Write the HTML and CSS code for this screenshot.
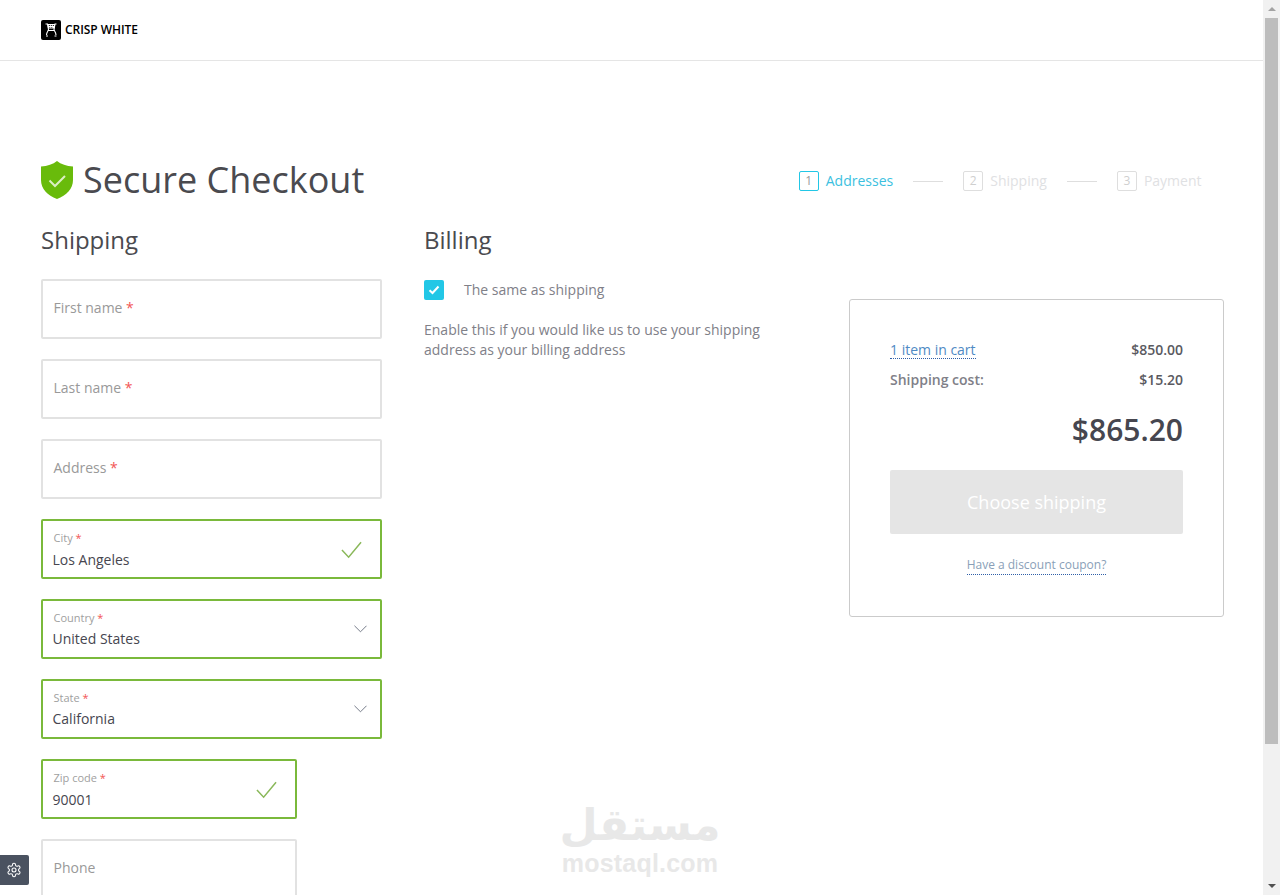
FILE: index.html
```html
<!DOCTYPE html>
<html lang="en">
<head>
<meta charset="utf-8">
<title>Secure Checkout</title>
<link rel="stylesheet" href="styles.css">
</head>
<body>
<div class="page">
  <div class="content">
    <header class="topbar">
      <a class="logo" href="#">
        <svg class="logo-mark" viewBox="0 0 20 20" aria-hidden="true">
          <rect width="20" height="20" rx="2" fill="#000"/>
          <path d="M6.500 4h7.500l-.5 4.500H7z" fill="#fff"/>
          <path d="M7.800 5h1v1h-1zM9.800 5h1v1h-1zM11.800 5h1v1h-1zM8.300 6.900h1v.8h-1zM10.300 6.900h1v.8h-1z" fill="#000"/>
          <path d="M4.500 4h2c.3 2 .8 4.500 1 5.500.2 1-2 2.500-2 5.500M15.500 4h-1.500c-.3 2-.8 4.500-1 5.500-.2 1 2 2.500 2 5.500M7 10.500h6M5 16h2M13.500 16h2" fill="none" stroke="#fff" stroke-width="1.100"/>
        </svg>
        <span class="logo-text">CRISP WHITE</span>
      </a>
    </header>

    <main class="main">
      <div class="head">
        <div class="title">
          <svg class="shield" viewBox="0 0 32 38" aria-hidden="true">
            <path d="M16 0c4 3.200 9.500 5 16 5.500v13.500c0 9-6.500 15.500-16 19C6.500 34.500 0 28 0 19V5.500C6.500 5 12 3.200 16 0z" fill="#69bb0b"/>
            <path d="M8.500 19.500l5.500 5.500 10-10" fill="none" stroke="#dcefc4" stroke-width="2"/>
          </svg>
          <h1>Secure Checkout</h1>
        </div>
        <ol class="steps">
          <li class="step step-active"><span class="step-num">1</span><span>Addresses</span></li>
          <li class="step-line"></li>
          <li class="step"><span class="step-num">2</span><span>Shipping</span></li>
          <li class="step-line"></li>
          <li class="step"><span class="step-num">3</span><span>Payment</span></li>
        </ol>
      </div>

      <div class="columns">
        <section class="col-shipping">
          <h2>Shipping</h2>
          <div class="fields">
            <div class="field"><span class="placeholder">First name <b>*</b></span></div>
            <div class="field"><span class="placeholder">Last name <b>*</b></span></div>
            <div class="field"><span class="placeholder">Address <b>*</b></span></div>
            <div class="field field-valid">
              <div class="stack"><span class="label">City <b>*</b></span><span class="value">Los Angeles</span></div>
              <svg class="check" viewBox="0 0 22 18" aria-hidden="true"><path d="M1 9l7 7.500L21 1"/></svg>
            </div>
            <div class="field field-valid">
              <div class="stack stack-select"><span class="label">Country <b>*</b></span><span class="value">United States</span></div>
              <svg class="chevron" viewBox="0 0 14 8" aria-hidden="true"><path d="M.5.500L7 7l6.500-6.500"/></svg>
            </div>
            <div class="field field-valid">
              <div class="stack stack-select"><span class="label">State <b>*</b></span><span class="value">California</span></div>
              <svg class="chevron" viewBox="0 0 14 8" aria-hidden="true"><path d="M.5.500L7 7l6.500-6.500"/></svg>
            </div>
            <div class="field field-valid field-short">
              <div class="stack"><span class="label">Zip code <b>*</b></span><span class="value">90001</span></div>
              <svg class="check" viewBox="0 0 22 18" aria-hidden="true"><path d="M1 9l7 7.500L21 1"/></svg>
            </div>
            <div class="field field-short"><span class="placeholder">Phone</span></div>
          </div>
        </section>

        <section class="col-billing">
          <h2>Billing</h2>
          <label class="same">
            <span class="checkbox">
              <svg viewBox="0 0 12 10" aria-hidden="true"><path d="M1.500 5.200L4.500 8l6-6.500"/></svg>
            </span>
            <span>The same as shipping</span>
          </label>
          <p class="hint">Enable this if you would like us to use your shipping address as your billing address</p>
        </section>

        <aside class="summary">
          <div class="row"><a class="link-cart" href="#">1 item in cart</a><span class="price">$850.00</span></div>
          <div class="row"><span class="cost-label">Shipping cost:</span><span class="price">$15.20</span></div>
          <div class="total">$865.20</div>
          <button class="btn" type="button">Choose shipping</button>
          <div class="coupon"><a href="#">Have a discount coupon?</a></div>
        </aside>
      </div>
    </main>
  </div>

  <div class="scrollbar">
    <span class="arrow-up"></span>
    <span class="thumb"></span>
    <span class="arrow-down"></span>
  </div>

  <button class="gear" type="button" aria-label="Settings">
    <svg viewBox="0 0 24 24" aria-hidden="true">
      <path d="M12.220 2h-.44a2 2 0 0 0-2 2v.18a2 2 0 0 1-1 1.730l-.43.25a2 2 0 0 1-2 0l-.15-.08a2 2 0 0 0-2.730.73l-.22.38a2 2 0 0 0 .73 2.730l.15.1a2 2 0 0 1 1 1.720v.51a2 2 0 0 1-1 1.740l-.15.09a2 2 0 0 0-.73 2.730l.22.38a2 2 0 0 0 2.730.73l.15-.08a2 2 0 0 1 2 0l.43.25a2 2 0 0 1 1 1.730V20a2 2 0 0 0 2 2h.44a2 2 0 0 0 2-2v-.18a2 2 0 0 1 1-1.730l.43-.25a2 2 0 0 1 2 0l.15.08a2 2 0 0 0 2.730-.73l.22-.39a2 2 0 0 0-.73-2.730l-.15-.08a2 2 0 0 1-1-1.740v-.5a2 2 0 0 1 1-1.740l.15-.09a2 2 0 0 0 .73-2.730l-.22-.38a2 2 0 0 0-2.730-.73l-.15.08a2 2 0 0 1-2 0l-.43-.25a2 2 0 0 1-1-1.730V4a2 2 0 0 0-2-2z"/>
      <circle cx="12" cy="12" r="3"/>
    </svg>
  </button>

  <div class="watermark">
    <span class="wm-ar" lang="ar" dir="rtl">مستقل</span>
    <span class="wm-en">mostaql.com</span>
  </div>
</div>
</body>
</html>
```

FILE: styles.css
```css
* { box-sizing: border-box; }
html, body { margin: 0; height: 100%; overflow: hidden; }
body { font-family: "Open Sans", "Liberation Sans", sans-serif; font-size: 14px; color: #4a4a4f; background: #fff; }
a { color: inherit; text-decoration: none; }
h1, h2, p, ol { margin: 0; padding: 0; font-weight: 400; }
ol { list-style: none; }

.page { position: relative; display: flex; height: 100vh; overflow: hidden; }
.content { flex: 1; min-width: 0; }

.topbar { height: 61px; border-bottom: 1px solid #e5e5e5; padding-left: 41px; display: flex; align-items: center; }
.logo { display: flex; align-items: center; gap: 4px; font-size: 12px; font-weight: 600; color: #000; }
.logo-mark { width: 20px; height: 20px; display: block; }
.logo-text { line-height: 16px; margin-bottom: 1px; letter-spacing: -.05px; }

.main { padding: 100px 39px 0 41px; }
.head { display: flex; align-items: center; justify-content: space-between; height: 38px; }
.title { display: flex; align-items: center; gap: 10px; }
.shield { width: 32px; height: 38px; display: block; }
h1 { font-size: 36px; line-height: 38px; color: #4a4a4f; white-space: nowrap; }

.steps { display: flex; align-items: center; gap: 20px; padding: 2px 22.5px 0 0; color: #dfe1e3; }
.step { display: flex; align-items: center; gap: 7px; line-height: 20px; }
.step-num { width: 20px; height: 20px; border: 1px solid #dedede; border-radius: 2px; font-size: 12px; line-height: 18px; text-align: center; color: #cfcfcf; }
.step-line { width: 30px; height: 1px; background: #dedede; }
.step-active { color: #3cbfe0; }
.step-active .step-num { border-color: #22c7e6; color: #9a9a9a; }

.columns { display: flex; margin-top: 25px; align-items: flex-start; }
h2 { font-size: 24px; line-height: 32px; color: #4a4a4f; }

.col-shipping { width: 341px; flex: none; }
.fields { margin-top: 23px; display: flex; flex-direction: column; gap: 20px; }
.field { height: 60px; border: 2px solid #e2e2e2; border-radius: 2px; padding: 0 18px 0 10.5px; display: flex; align-items: center; justify-content: space-between; }
.field-valid { border-color: #7ab93b; }
.field-short { width: 256px; }
.placeholder { color: #999; font-size: 14px; margin-bottom: 4px; }
.placeholder b, .label b { color: #f25555; font-weight: 400; }
.stack { display: flex; flex-direction: column; align-self: flex-start; padding-top: 9px; }
.label { font-size: 11px; line-height: 15px; color: #a0a0a0; }
.value { font-size: 14px; line-height: 20px; color: #46464f; margin: 5px 0 0 -1px; }
.stack-select .value { margin-top: 4px; }
.check { width: 21px; height: 18px; fill: none; stroke: #8ab85a; stroke-width: 1.6; margin-top: 2px; }
.chevron { width: 13px; height: 8px; fill: none; stroke: #6a7080; stroke-width: 1; margin-right: -5px; }

.col-billing { width: 345px; flex: none; margin-left: 42px; }
.same { display: flex; align-items: center; gap: 20px; margin-top: 24px; line-height: 20px; color: #808088; }
.checkbox { width: 20px; height: 20px; border-radius: 2px; background: #22c7e6; display: flex; align-items: center; justify-content: center; }
.checkbox svg { width: 12px; height: 10px; fill: none; stroke: #fff; stroke-width: 2; }
.hint { margin-top: 20px; line-height: 20px; color: #808088; }

.summary { margin-left: auto; margin-top: 75px; width: 375px; height: 318px; border: 1px solid #cbcbcb; border-radius: 3px; padding: 39px 40px 0; }
.row { display: flex; justify-content: space-between; align-items: center; height: 20px; margin-bottom: 10px; }
.link-cart { color: #4f8ac4; line-height: 17px; border-bottom: 1px dotted #2f5fa8; margin-top: 2px; }
.cost-label { font-weight: 600; color: #808088; }
.price { font-weight: 600; font-size: 14px; color: #5a5a5f; }
.total { margin-top: 20px; text-align: right; font-size: 30px; line-height: 42px; font-weight: 600; color: #46464f; }
.btn { display: block; width: 100%; height: 64px; margin-top: 19px; border: 0; border-radius: 2px; background: #e5e5e5; color: #fff; font: 500 18px "Open Sans", sans-serif; }
.coupon { margin-top: 22px; text-align: center; font-size: 12px; line-height: 18px; }
.coupon a { display: inline-block; color: #8a9fb8; border-bottom: 1px dotted #2f5fa8; }

.scrollbar { position: relative; flex: none; width: 17px; background: #f1f1f1; }
.thumb { position: absolute; left: 2px; right: 2px; top: 18px; height: 726px; background: #bdbdbd; }
.arrow-up, .arrow-down { position: absolute; left: 5px; width: 0; height: 0; border-left: 4px solid transparent; border-right: 4px solid transparent; }
.arrow-up { top: 7px; border-bottom: 4px solid #a3a3a3; }
.arrow-down { bottom: 7px; border-top: 4px solid #505050; }

.gear { position: absolute; left: 0; top: 855px; width: 29px; height: 30px; padding: 0 1px 0 0; border: 0; border-radius: 0 2px 2px 0; background: #4a5260; display: flex; align-items: center; justify-content: center; }
.gear svg { width: 16px; height: 16px; fill: none; stroke: #fff; stroke-width: 1.6; }

.watermark { position: absolute; left: 540px; top: 795px; width: 200px; display: flex; flex-direction: column; align-items: center; color: #e8e8e8; font-weight: 700; pointer-events: none; }
.wm-ar { font-family: "DejaVu Sans", sans-serif; font-size: 44px; line-height: 60px; }
.wm-en { font-family: "Liberation Sans", sans-serif; font-size: 25px; line-height: 20px; letter-spacing: .2px; margin-top: -2px; }
```
